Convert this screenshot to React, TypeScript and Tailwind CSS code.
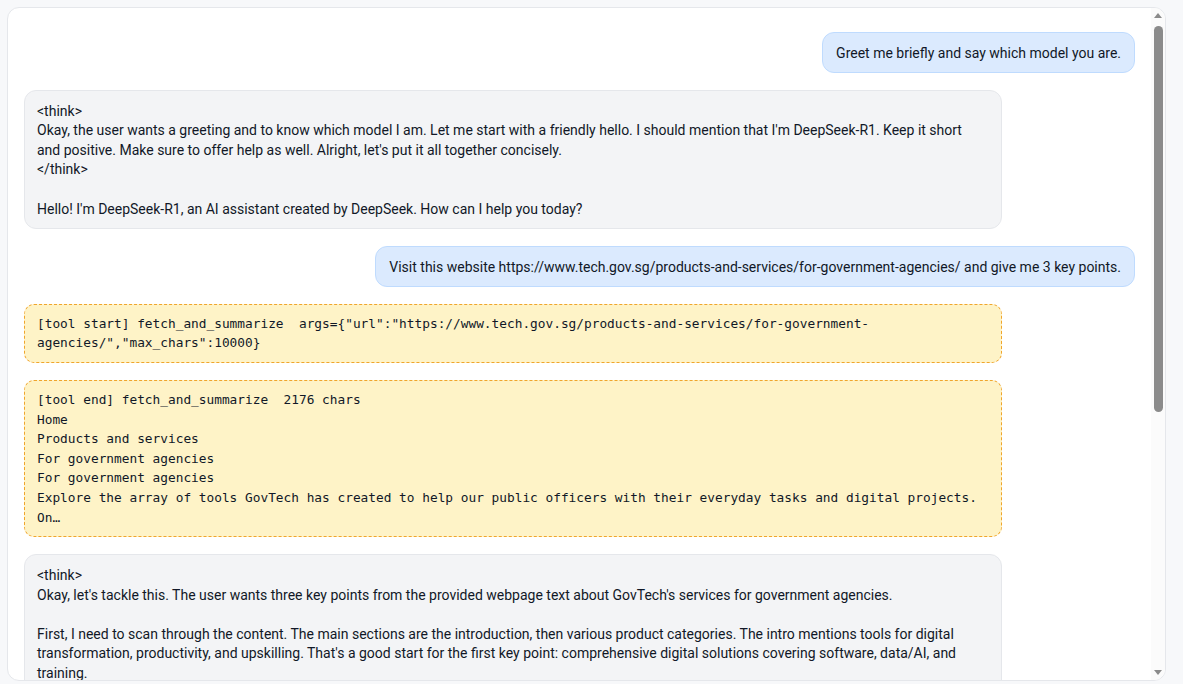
import React from "react";

type Role = "user" | "assistant" | "tool";

type Message = {
    readonly id: string;
    readonly role: Role;
    readonly text: string;
};

const messages: ReadonlyArray<Message> = [
    { id: "1", role: "user", text: "Greet me briefly and say which model you are." },
    {
        id: "2",
        role: "assistant",
        text:
            "<think>\nOkay, the user wants a greeting and to know which model I am. Let me start with a friendly hello. I should mention that I'm DeepSeek-R1. Keep it short\nand positive. Make sure to offer help as well. Alright, let's put it all together concisely.\n</think>\n\nHello! I'm DeepSeek-R1, an AI assistant created by DeepSeek. How can I help you today?",
    },
    {
        id: "3",
        role: "user",
        text: "Visit this website https://www.tech.gov.sg/products-and-services/for-government-agencies/ and give me 3 key points.",
    },
    {
        id: "4",
        role: "tool",
        text: '[tool start] fetch_and_summarize  args={"url":"https://www.tech.gov.sg/products-and-services/for-government-agencies/","max_chars":10000}',
    },
    {
        id: "5",
        role: "tool",
        text:
            "[tool end] fetch_and_summarize  2176 chars\nHome\nProducts and services\nFor government agencies\nFor government agencies\nExplore the array of tools GovTech has created to help our public officers with their everyday tasks and digital projects. On…",
    },
    {
        id: "6",
        role: "assistant",
        text:
            "<think>\nOkay, let's tackle this. The user wants three key points from the provided webpage text about GovTech's services for government agencies.\n\nFirst, I need to scan through the content. The main sections are the introduction, then various product categories. The intro mentions tools for digital\ntransformation, productivity, and upskilling. That's a good start for the first key point: comprehensive digital solutions covering software, data/AI, and\ntraining.\n\nNext, looking at the product categories: there are sections on software development, data and AI, cybersecurity, and infrastructure. These show the breadth of\nofferings, so the second point could be about the range of specialised platforms available to agencies.\n\nThen there's mention of support for public officers, like training programmes and communities of practice. That fits as the third point: capability building and\nsupport for officers.\n\nI should keep each point concise and make sure they reflect the page accurately without adding extra details.\n</think>\n\nHere are 3 key points from the GovTech page for government agencies:\n\n1. Comprehensive digital toolkit – GovTech offers a wide array of tools to help public officers with everyday tasks and digital projects.\n2. Broad range of products – Offerings span software development, data and AI, cybersecurity and digital infrastructure.\n3. Capability building – Agencies are supported with training, guides and communities to upskill officers.",
    },
];

function Bubble({ message }: { message: Message }) {
    if (message.role === "user") {
        return (
            <div className="self-end max-w-[88%] w-fit rounded-xl border border-[#bfdbfe] bg-[#dbeafe] px-[13px] pt-[10.5px] pb-[8.5px] text-[14px] leading-[1.4] text-[#111827] whitespace-pre-wrap">
                {message.text}
            </div>
        );
    }
    if (message.role === "tool") {
        return (
            <div className="self-start max-w-[88%] w-fit rounded-[10px] border border-dashed border-[#f0a52c] bg-[#fef3c7] px-3 py-[9px] font-['DejaVu_Sans_Mono',monospace] text-[12.8px] leading-[19.6px] text-[#111827] whitespace-pre-wrap break-words">
                {message.text}
            </div>
        );
    }
    // assistant replies wrap, so they always sit at the full bubble width
    return (
        <div className="self-start w-[88%] rounded-xl border border-[#e5e7eb] bg-[#f3f4f6] px-3 pt-[11px] pb-[9px] text-[14px] leading-[1.4] text-[#111827] whitespace-pre-wrap">
            {message.text}
        </div>
    );
}

function Scrollbar() {
    return (
        <div className="flex w-[14px] shrink-0 flex-col items-center bg-[#fbfbfb] pt-[5px] pb-[5px]">
            <div className="h-0 w-0 border-x-[4.5px] border-b-[5px] border-x-transparent border-b-[#8b8b8b]" />
            <div className="mt-[8px] h-[386px] w-[9px] rounded-full bg-[#8b8b8b]" />
            <div className="flex-1" />
            <div className="h-0 w-0 border-x-[4.5px] border-t-[5px] border-x-transparent border-t-[#8b8b8b]" />
        </div>
    );
}

export default function App() {
    return (
        <main className="h-[684px] overflow-hidden bg-[#f7f8fa] pl-[7px] pr-[17px] pt-[7px] font-['Roboto','Noto_Sans',sans-serif]">
            <div className="flex h-[674px] overflow-hidden rounded-xl border border-[#e5e7eb] bg-white">
                <div className="min-w-0 flex-1 overflow-hidden">
                    <div className="flex flex-col gap-[17px] pl-4 pr-4 pt-6 pb-4">
                        {messages.map((m) => (
                            <Bubble key={m.id} message={m} />
                        ))}
                    </div>
                </div>
                <Scrollbar />
            </div>
        </main>
    );
}
